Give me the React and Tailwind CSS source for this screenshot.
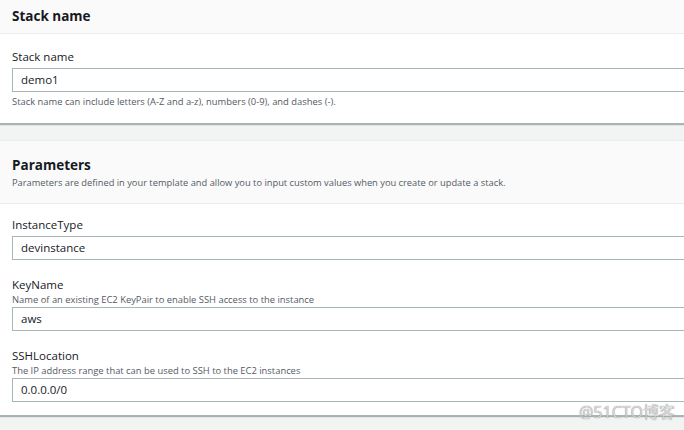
import React from "react";

const font = { fontFamily: '"Open Sans", "Noto Sans CJK SC", sans-serif' };

function Field({ label, hint, value }) {
  return (
    <div>
      <div className="text-[11.5px] leading-[16px] text-[#16191f]">{label}</div>
      {hint && <div className="text-[9.4px] leading-[13px] text-[#545b64]">{hint}</div>}
      <div
        className={`${hint ? "mt-[1px]" : "mt-[3px]"} -mr-4 flex h-[24px] items-center border border-[#aab7b8] bg-white pl-2 text-[11.5px] text-[#16191f]`}
      >
        {value}
      </div>
    </div>
  );
}

export default function App() {
  return (
    <div className="relative h-[430px] w-[684px] overflow-hidden bg-[#f2f3f3]" style={font}>
      <section className="border-b border-[#aab7b8] bg-white shadow-[0_1px_1px_rgba(0,28,36,0.3)]">
        <div className="flex h-[34px] items-center border-b border-[#eaeded] bg-[#fafafa] px-3">
          <h2 className="text-[13.5px] font-bold text-[#16191f]">Stack name</h2>
        </div>
        <div className="px-3 pt-[15px] pb-[15px]">
          <div className="text-[11.5px] leading-[16px] text-[#16191f]">Stack name</div>
          <div className="mt-[3px] -mr-4 flex h-[24px] items-center border border-[#aab7b8] bg-white pl-2 text-[11.5px] text-[#16191f]">
            demo1
          </div>
          <div className="mt-[3px] text-[9.4px] leading-[13px] text-[#545b64]">
            Stack name can include letters (A-Z and a-z), numbers (0-9), and dashes (-).
          </div>
        </div>
      </section>

      <section className="mt-[16px] border-t border-[#eaeded] border-b border-b-[#aab7b8] bg-white shadow-[0_1px_1px_rgba(0,28,36,0.3)]">
        <div className="border-b border-[#eaeded] bg-[#fafafa] px-3 pt-[14px] pb-[13px]">
          <h2 className="text-[13.5px] leading-[21px] font-bold text-[#16191f]">Parameters</h2>
          <p className="text-[9.3px] leading-[14px] text-[#545b64]">
            Parameters are defined in your template and allow you to input custom values when you create or update a stack.
          </p>
        </div>
        <div className="flex flex-col gap-[17px] px-3 pt-[13px] pb-[13px]">
          <Field label="InstanceType" value="devinstance" />
          <Field
            label="KeyName"
            hint="Name of an existing EC2 KeyPair to enable SSH access to the instance"
            value="aws"
          />
          <Field
            label="SSHLocation"
            hint="The IP address range that can be used to SSH to the EC2 instances"
            value="0.0.0.0/0"
          />
        </div>
      </section>

      <div className="absolute right-[9px] bottom-[10px] text-[16px] leading-none text-[#d8d8d8] [text-shadow:0_0_1px_#777]">
        @51CTO博客
      </div>
    </div>
  );
}
